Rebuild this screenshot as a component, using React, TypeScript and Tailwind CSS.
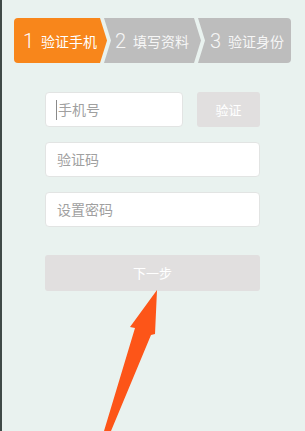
import React from 'react';

const steps = [
  { num: '1', label: '验证手机', active: true },
  { num: '2', label: '填写资料', active: false },
  { num: '3', label: '验证身份', active: false },
];

const font = { fontFamily: '"Noto Sans CJK SC", "Noto Sans", sans-serif' };

const App: React.FC = () => {
  return (
    <div
      className="relative h-[431px] w-full overflow-hidden border-l-[2px] border-[#3f4a47] bg-[#e9f2ef]"
      style={font}
    >
      {/* Step bar */}
      <div className="flex h-[45px] pl-[12px] pr-[14px] mt-[18px]">
        <div className="flex w-[93px] shrink-0 items-center gap-[7px] rounded-l-[4px] bg-[#f8861b] pl-[9px] text-white [clip-path:polygon(0_0,calc(100%_-_7px)_0,100%_50%,calc(100%_-_7px)_100%,0_100%)]">
          <span className="text-[20px] font-light leading-none" style={{ fontFamily: 'Roboto, sans-serif' }}>1</span>
          <span className="text-[14px] leading-none">{steps[0].label}</span>
        </div>
        <div className="-ml-[3px] flex w-[97px] shrink-0 items-center gap-[7px] bg-[#bdbdbd] pl-[11px] text-[#f6f6f6] [clip-path:polygon(0_0,calc(100%_-_7px)_0,100%_50%,calc(100%_-_7px)_100%,0_100%,7px_50%)]">
          <span className="text-[20px] font-light leading-none" style={{ fontFamily: 'Roboto, sans-serif' }}>2</span>
          <span className="text-[14px] leading-none">{steps[1].label}</span>
        </div>
        <div className="-ml-[3px] flex flex-1 items-center gap-[7px] rounded-r-[4px] bg-[#bdbdbd] pl-[12px] text-[#f6f6f6] [clip-path:polygon(0_0,100%_0,100%_100%,0_100%,7px_50%)]">
          <span className="text-[20px] font-light leading-none" style={{ fontFamily: 'Roboto, sans-serif' }}>3</span>
          <span className="text-[14px] leading-none">{steps[2].label}</span>
        </div>
      </div>

      {/* Form */}
      <div className="mt-[29px] flex flex-col pl-[43px] pr-[45px]">
        <div className="flex gap-[14px]">
          <div className="flex h-[35px] w-[138px] items-center rounded-[4px] border border-[#e2e4e3] bg-white pl-[10px]">
            <span className="mr-[1px] h-[20px] w-[1px] bg-[#8a8a8a]" />
            <span className="text-[14px] text-[#a0a0a0]">手机号</span>
          </div>
          <div className="flex h-[35px] flex-1 items-center justify-center rounded-[3px] bg-[#e1dfdf] text-[13px] text-white">
            验证
          </div>
        </div>
        <div className="mt-[15px] flex h-[35px] items-center rounded-[4px] border border-[#e2e4e3] bg-white pl-[11px] text-[14px] text-[#a0a0a0]">
          验证码
        </div>
        <div className="mt-[15px] flex h-[35px] items-center rounded-[4px] border border-[#e2e4e3] bg-white pl-[11px] text-[14px] text-[#a0a0a0]">
          设置密码
        </div>
        <div className="mt-[28px] flex h-[36px] items-center justify-center rounded-[3px] bg-[#e1dfdf] text-[13px] text-white">
          下一步
        </div>
      </div>

      {/* Pointer arrow */}
      <svg className="pointer-events-none absolute left-[-2px] top-0" width="305" height="431" viewBox="0 0 305 431">
        <polygon
          points="157,290 155,334 151,335 111,431 104,431 135,328 130,327"
          fill="#fd5518"
        />
      </svg>
    </div>
  );
};

export default App;
